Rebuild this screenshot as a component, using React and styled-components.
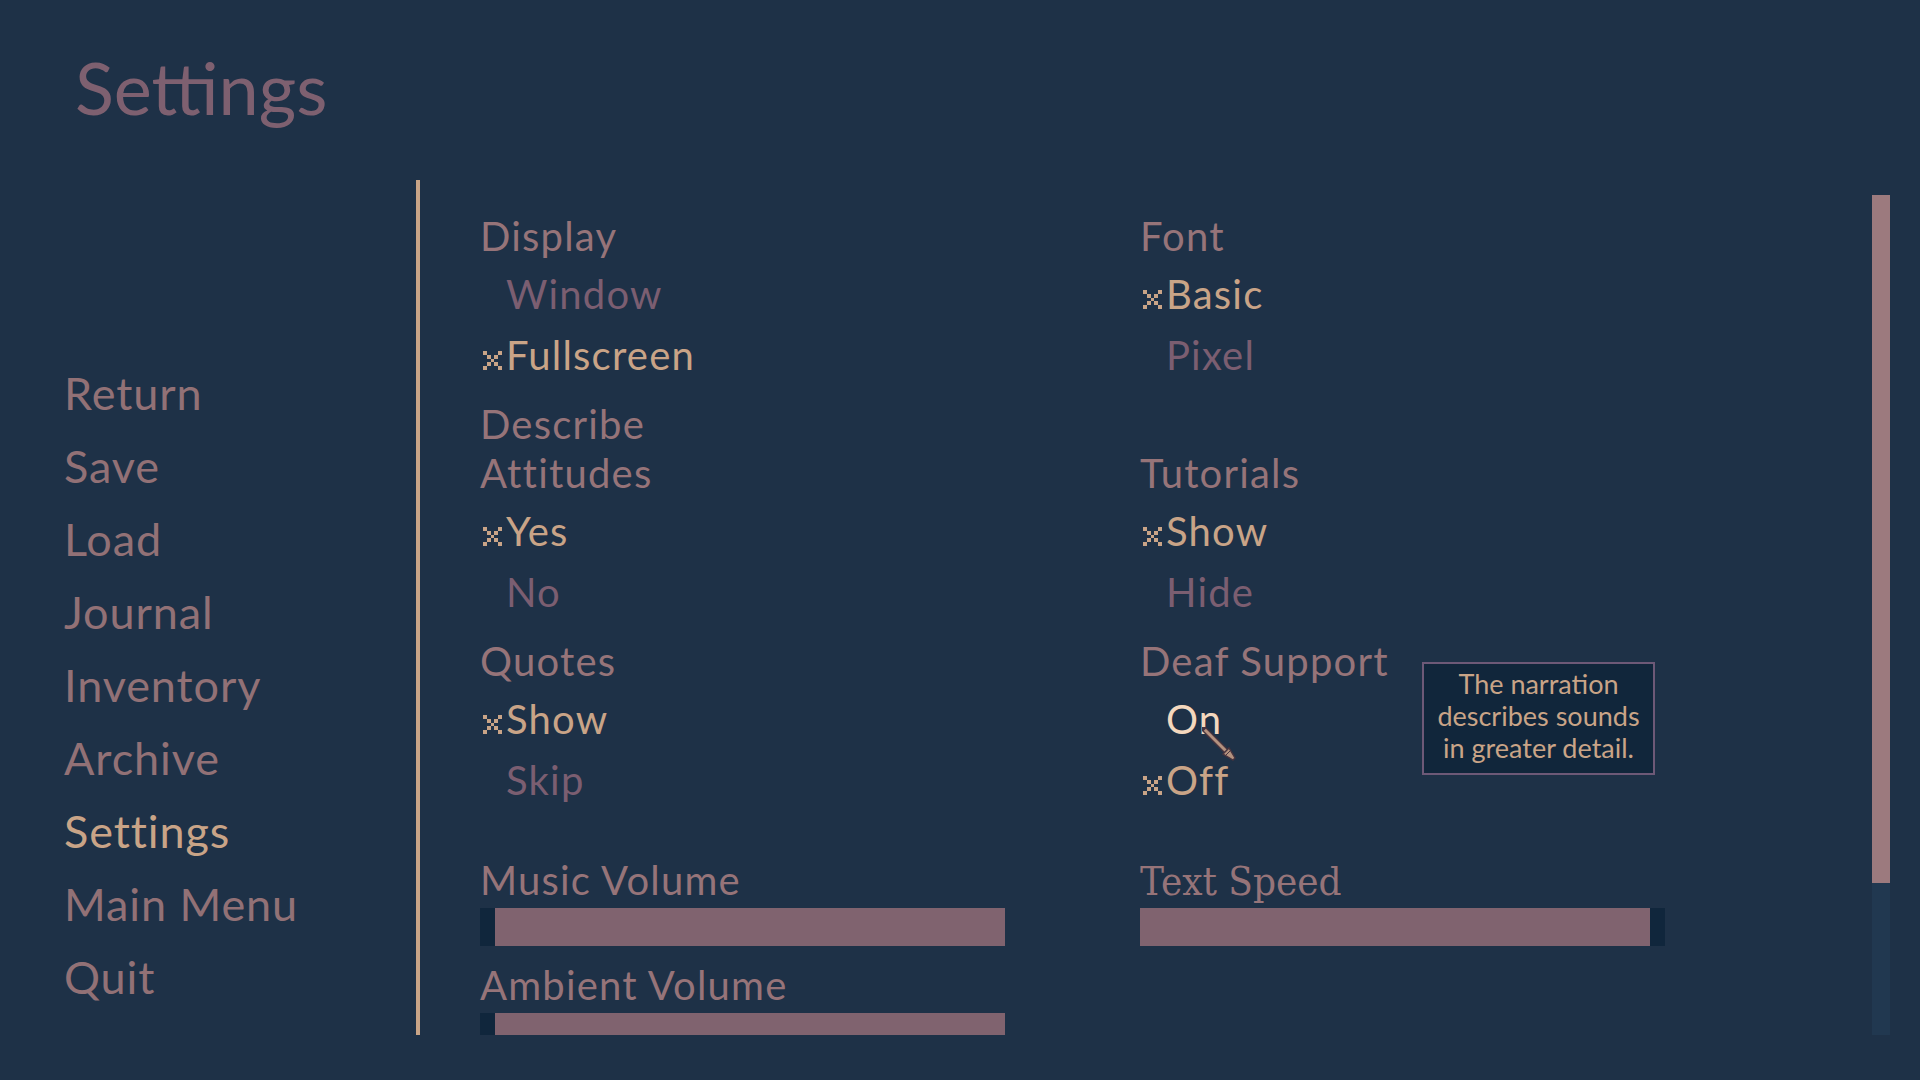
import styled, { createGlobalStyle } from 'styled-components';

const GlobalStyle = createGlobalStyle`
  html, body {
    margin: 0;
    padding: 0;
    background: #1e3147;
  }
  body {
    font-family: Lato, "Noto Sans", sans-serif;
    overflow: hidden;
  }
`;

const NAV_ITEMS = [
  'Return',
  'Save',
  'Load',
  'Journal',
  'Inventory',
  'Archive',
  'Settings',
  'Main Menu',
  'Quit',
];

// pixel "x" used for the chosen option
const MARK_CELLS = [
  [0, 0],
  [4, 0],
  [1, 1],
  [3, 1],
  [2, 2],
  [1, 3],
  [3, 3],
  [0, 4],
  [4, 4],
];

function Mark() {
  return (
    <MarkSvg viewBox="0 0 5 5" shapeRendering="crispEdges">
      {MARK_CELLS.map(([x, y]) => (
        <rect key={`${x}-${y}`} x={x} y={y} width="1" height="1" fill="#c9a487" />
      ))}
    </MarkSvg>
  );
}

function Choice({ state = 'idle', children }) {
  return (
    <Option $state={state}>
      <MarkSlot>{state === 'selected' && <Mark />}</MarkSlot>
      {children}
    </Option>
  );
}

function Pointer() {
  return (
    <PointerSvg viewBox="0 0 34 34">
      <line x1="2" y1="2" x2="26" y2="26" stroke="#47343f" strokeWidth="5.5" strokeLinecap="square" />
      <line x1="2.8" y1="2.8" x2="26" y2="26" stroke="#b4927f" strokeWidth="3" />
      <polygon points="21,27 27,21 33,31 31,33" fill="#b4927f" stroke="#47343f" strokeWidth="1.4" />
      <line x1="24" y1="28" x2="28" y2="24" stroke="#47343f" strokeWidth="1" />
    </PointerSvg>
  );
}

function Slider({ label, value, fillSide = 'left', speed }) {
  return (
    <SliderBlock>
      {speed ? <SpeedLabel>{label}</SpeedLabel> : <Label>{label}</Label>}
      <Bar $fillSide={fillSide}>
        <BarFill style={{ width: `${value * 100}%` }} />
      </Bar>
    </SliderBlock>
  );
}

export default function App() {
  return (
    <>
      <GlobalStyle />
      <Page>
        <Title>Settings</Title>
        <Body>
          <Nav>
            {NAV_ITEMS.map((item) => (
              <NavItem key={item} $active={item === 'Settings'}>
                {item}
              </NavItem>
            ))}
          </Nav>
          <Divider />
          <Viewport>
            <Grid>
              <Group>
                <Label>Display</Label>
                <Options>
                  <Choice>Window</Choice>
                  <Choice state="selected">Fullscreen</Choice>
                </Options>
              </Group>
              <Group>
                <Label>Font</Label>
                <Options>
                  <Choice state="selected">Basic</Choice>
                  <Choice>Pixel</Choice>
                </Options>
              </Group>

              <Group>
                <Label>
                  Describe
                  <br />
                  Attitudes
                </Label>
                <Options>
                  <Choice state="selected">Yes</Choice>
                  <Choice>No</Choice>
                </Options>
              </Group>
              <Group>
                <Label>Tutorials</Label>
                <Options>
                  <Choice state="selected">Show</Choice>
                  <Choice>Hide</Choice>
                </Options>
              </Group>

              <Group>
                <Label>Quotes</Label>
                <Options>
                  <Choice state="selected">Show</Choice>
                  <Choice>Skip</Choice>
                </Options>
              </Group>
              <Group $overlay>
                <Label>Deaf Support</Label>
                <Options>
                  <Choice state="hover">On</Choice>
                  <Choice state="selected">Off</Choice>
                </Options>
                <Tooltip>
                  The narration
                  <br />
                  describes sounds
                  <br />
                  in greater detail.
                </Tooltip>
                <Pointer />
              </Group>

              <SliderStack>
                <Slider label="Music Volume" value={0.971} fillSide="right" />
                <Slider label="Ambient Volume" value={0.971} fillSide="right" />
              </SliderStack>
              <SliderStack>
                <Slider label="Text Speed" value={0.971} speed />
              </SliderStack>
            </Grid>
          </Viewport>
          <ScrollTrack>
            <ScrollThumb style={{ height: `${(688 / 840) * 100}%` }} />
          </ScrollTrack>
        </Body>
      </Page>
    </>
  );
}

const Page = styled.div`
  width: 100vw;
  height: 100vh;
  background: #1e3147;
  display: flex;
  flex-direction: column;
  overflow: hidden;
`;

const Title = styled.h1`
  margin: 44px 0 0;
  padding-left: 75px;
  height: 86px;
  font-size: 72px;
  line-height: 86px;
  font-weight: 400;
  color: #7e6070;
`;

const Body = styled.div`
  margin-top: 50px;
  height: 855px;
  display: flex;
`;

const Nav = styled.nav`
  width: 416px;
  box-sizing: border-box;
  padding: 0 0 21px 64px;
  display: flex;
  flex-direction: column;
  justify-content: flex-end;
`;

const NavItem = styled.div`
  font-size: 45px;
  line-height: 73px;
  letter-spacing: 0.02em;
  color: ${(p) => (p.$active ? '#c9a487' : '#927176')};
`;

const Divider = styled.div`
  width: 4px;
  background: #c8a487;
`;

const Viewport = styled.div`
  flex: 1;
  overflow: hidden;
  box-sizing: border-box;
  padding: 32px 0 0 60px;
`;

const Grid = styled.div`
  display: grid;
  grid-template-columns: 660px 660px;
  row-gap: 14px;
  align-items: end;
`;

const Group = styled.section`
  display: flex;
  flex-direction: column;
  position: ${(p) => (p.$overlay ? 'relative' : 'static')};
`;

const Label = styled.div`
  font-size: 40px;
  line-height: 49px;
  letter-spacing: 0.03em;
  color: #967479;
`;

const SpeedLabel = styled.div`
  font-family: "DejaVu Serif Condensed", "DejaVu Serif", "Liberation Serif", serif;
  font-stretch: condensed;
  font-size: 40px;
  line-height: 47px;
  padding-top: 2px;
  color: #967479;
`;

const Options = styled.div`
  margin-top: 3px;
  display: flex;
  flex-direction: column;
`;

const OPTION_COLORS = {
  idle: '#7b5e71',
  selected: '#c9a487',
  hover: '#f4d8be',
};

const Option = styled.div`
  font-size: 40px;
  line-height: 61px;
  letter-spacing: 0.03em;
  white-space: nowrap;
  color: ${(p) => OPTION_COLORS[p.$state]};
`;

const MarkSlot = styled.span`
  display: inline-block;
  width: 26px;
  padding-left: 3px;
  box-sizing: border-box;
`;

const MarkSvg = styled.svg`
  width: 19px;
  height: 19px;
  vertical-align: baseline;
`;

const Tooltip = styled.div`
  position: absolute;
  left: 282px;
  top: 25px;
  width: 233px;
  height: 113px;
  box-sizing: border-box;
  padding: 4px 0 0;
  border: 2px solid #6d5977;
  background: #11263b;
  color: #c9a487;
  font-size: 27px;
  line-height: 32px;
  text-align: center;
`;

const PointerSvg = styled.svg`
  position: absolute;
  left: 62px;
  top: 90px;
  width: 34px;
  height: 34px;
`;

const SliderStack = styled.div`
  align-self: start;
  margin-top: 31px;
  display: flex;
  flex-direction: column;
  gap: 15px;
`;

const SliderBlock = styled.div`
  display: flex;
  flex-direction: column;
`;

const Bar = styled.div`
  margin-top: 3px;
  width: 525px;
  height: 38px;
  background: #10263c;
  display: flex;
  justify-content: ${(p) => (p.$fillSide === 'right' ? 'flex-end' : 'flex-start')};
`;

const BarFill = styled.div`
  height: 100%;
  background: #80636f;
`;

const ScrollTrack = styled.div`
  width: 18px;
  margin: 15px 30px 0 0;
  background: #213850;
`;

const ScrollThumb = styled.div`
  width: 100%;
  background: #9c7a7e;
`;
